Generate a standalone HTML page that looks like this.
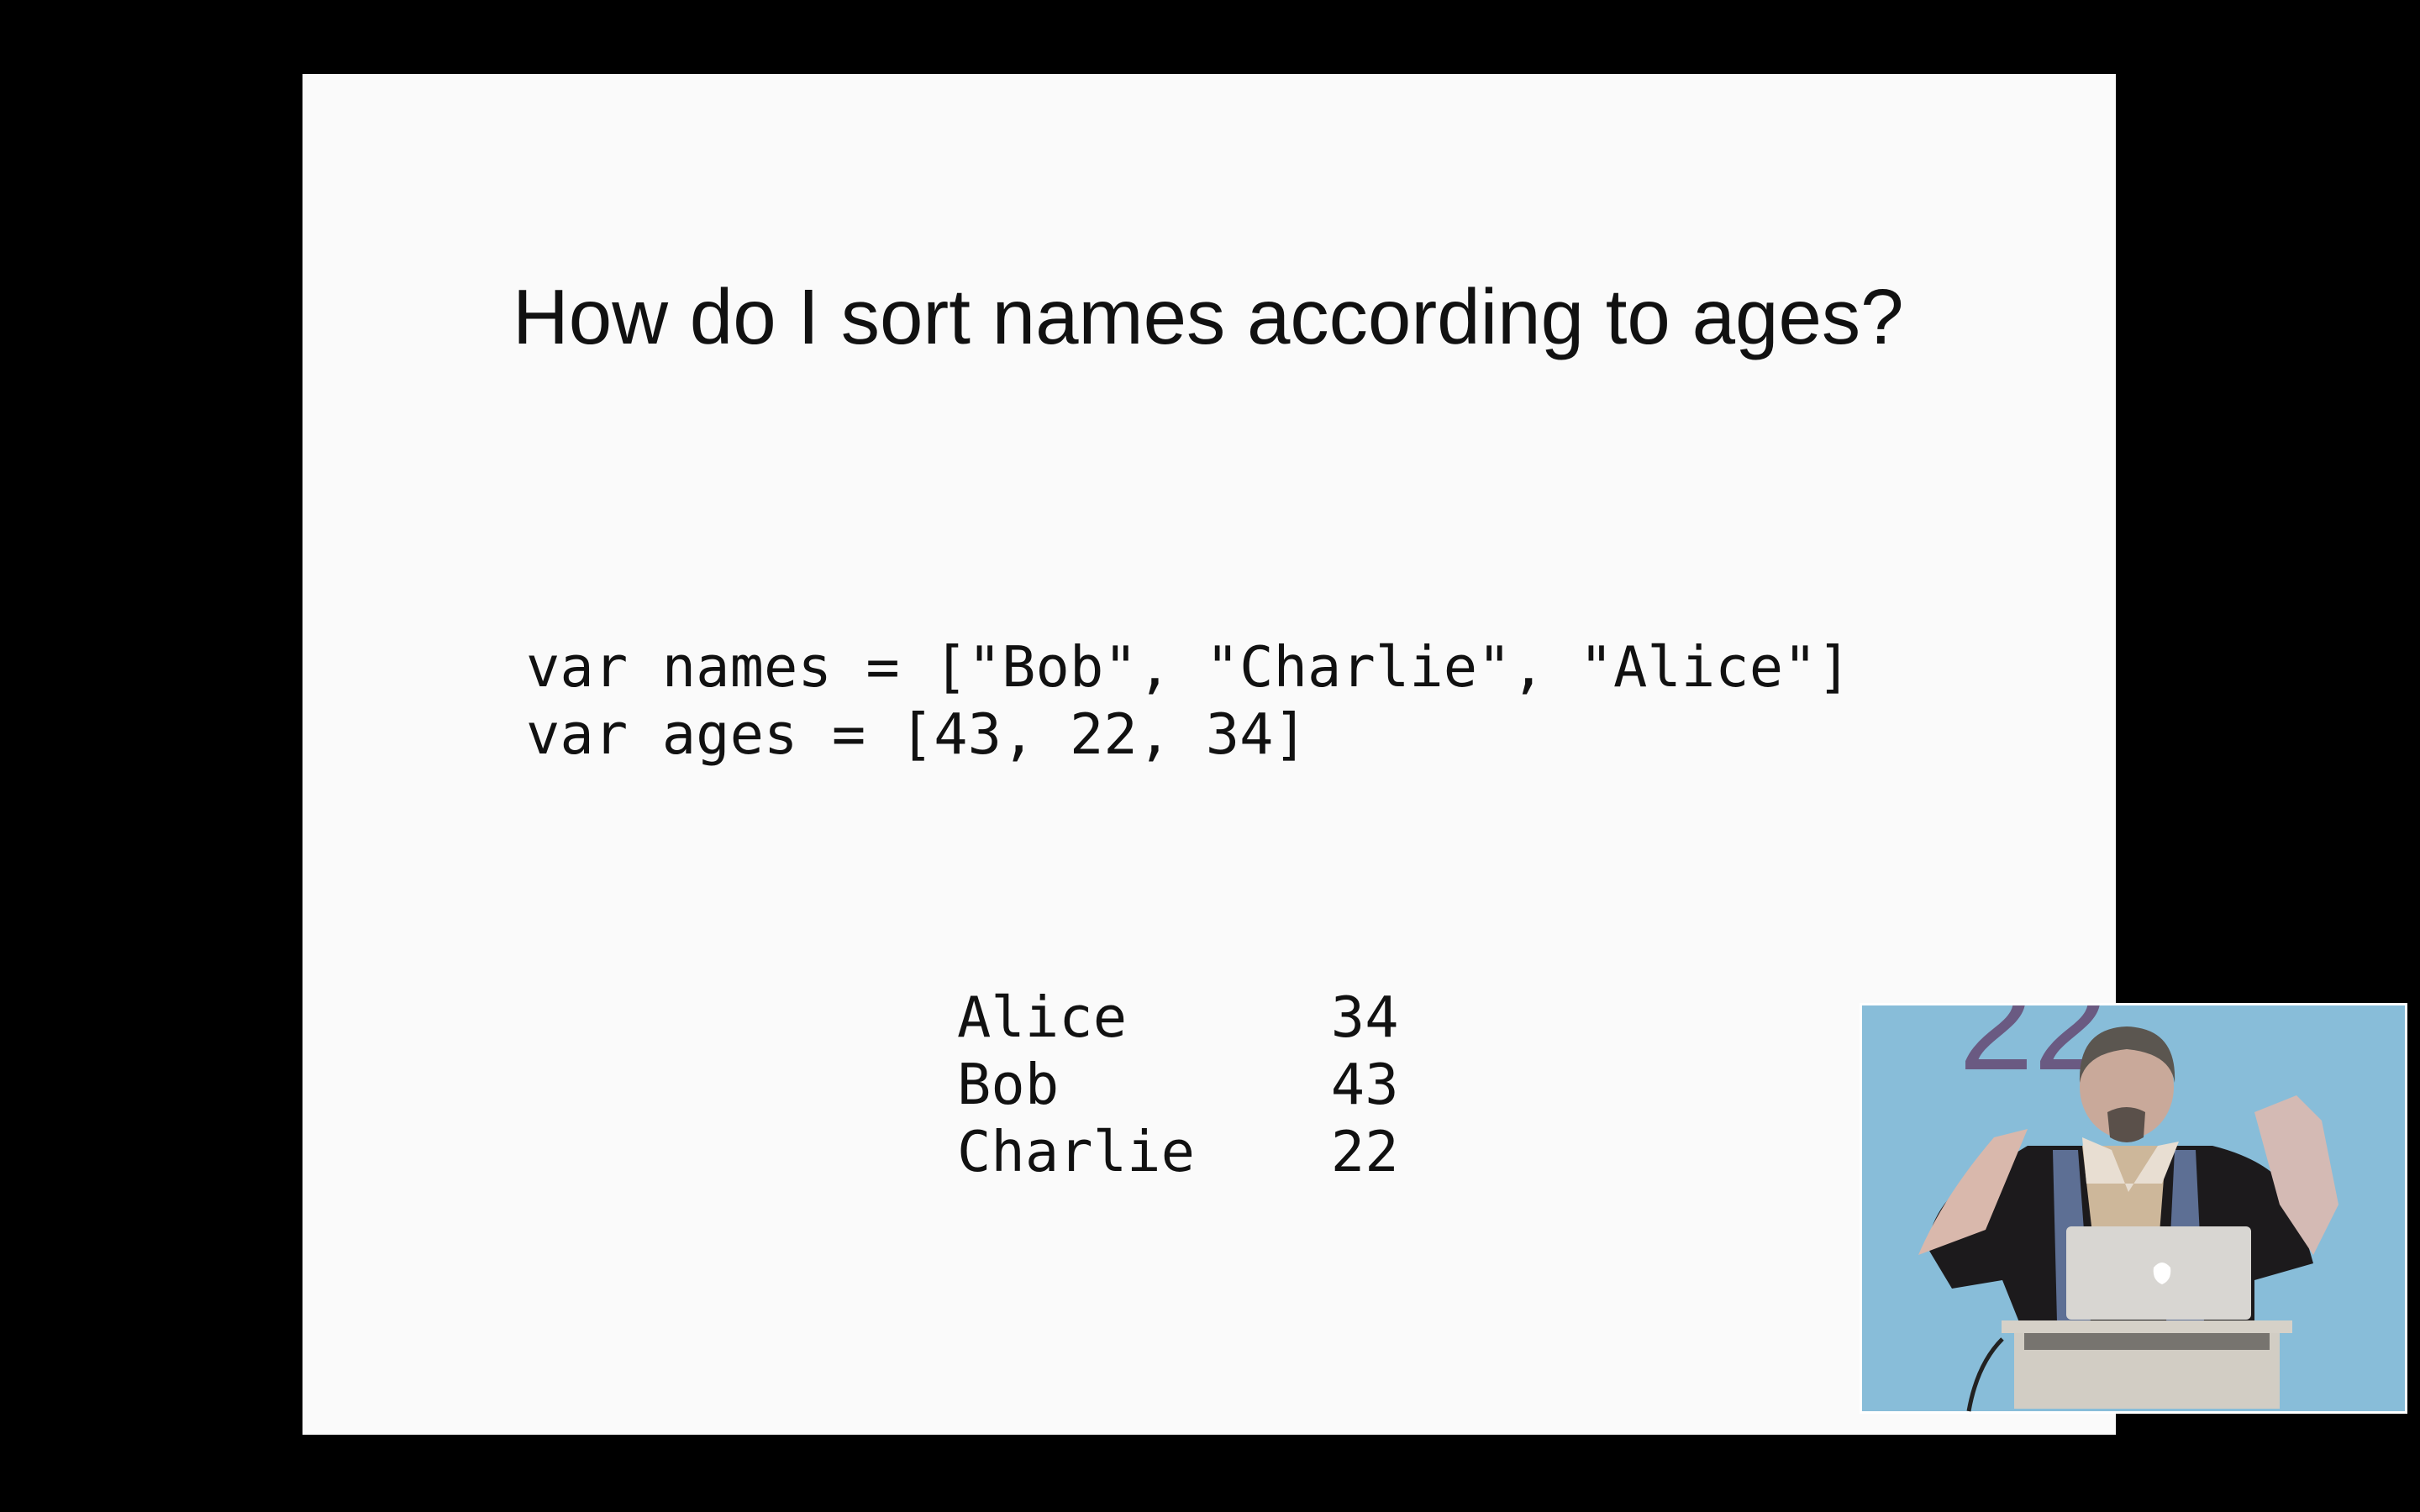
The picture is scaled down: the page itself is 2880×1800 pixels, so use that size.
<!DOCTYPE html>
<html><head><meta charset="utf-8"><style>
html,body{margin:0;padding:0;background:#000;width:2880px;height:1800px;overflow:hidden}
.slide{position:absolute;left:360px;top:88px;width:2158px;height:1620px;background:#fafafa}
.t{position:absolute;left:610px;top:324px;font-family:"Liberation Sans",sans-serif;font-size:92.5px;color:#111;white-space:nowrap}
.code{position:absolute;font-family:"DejaVu Sans Mono","Liberation Mono",monospace;font-size:67px;color:#111;white-space:pre;line-height:80px;letter-spacing:0.1px}
.inset{position:absolute;left:2213px;top:1194px;width:652px;height:489px;background:#fff}
</style></head><body>
<div class="slide"></div>
<div class="t">How do I sort names according to ages?</div>
<div class="code" style="left:626px;top:754px">var names = ["Bob", "Charlie", "Alice"]
var ages = [43, 22, 34]</div>
<div class="code" style="left:1139px;top:1171px">Alice      34
Bob        43
Charlie    22</div>
<div class="inset">
<svg width="652" height="489" viewBox="0 0 652 489">
<rect x="3" y="3" width="646" height="483" fill="#88bdd9"/>
<svg x="3" y="3" width="646" height="483">
<text x="115" y="76" font-family="Liberation Sans,sans-serif" font-size="160" fill="#6a5a82">22</text>
</svg>
<path d="M80 290 Q90 230 150 200 L200 170 L420 170 Q500 190 520 240 L540 310 L470 330 L470 380 L190 380 L170 330 L110 340 Z" fill="#1c1a1c"/>
<path d="M230 175 L260 175 L275 380 L235 380 Z" fill="#5d6f94"/>
<path d="M375 175 L400 175 L410 380 L365 380 Z" fill="#5d6f94"/>
<path d="M265 170 L365 170 L355 300 L280 300 Z" fill="#cdb79a"/>
<path d="M265 160 L300 175 L320 225 L355 170 L380 165 L360 215 L270 215 Z" fill="#e8ded2"/>
<ellipse cx="318" cy="100" rx="56" ry="62" fill="#c9a99a"/>
<path d="M262 95 Q260 30 318 28 Q378 30 375 95 Q370 60 318 55 Q268 60 262 95 Z" fill="#5b5650"/>
<path d="M295 130 Q318 118 340 130 L338 160 Q318 172 298 160 Z" fill="#5a504a"/>
<path d="M70 300 Q100 230 160 160 L200 150 L150 270 Z" fill="#d9b8ac"/>
<path d="M520 110 L550 140 L570 240 L540 300 L500 240 L470 130 Z" fill="#d4bab4"/>
<rect x="246" y="266" width="220" height="111" rx="6" fill="#d8d6d2"/>
<path d="M350 315 q10 -12 20 0 q2 15 -10 20 q-12 -5 -10 -20z" fill="#fff"/>
<rect x="169" y="378" width="346" height="15" fill="#d6d1c8"/>
<rect x="184" y="393" width="316" height="90" fill="#d2cdc4"/>
<rect x="196" y="393" width="292" height="20" fill="#77746f"/>
<path d="M170 400 Q140 430 130 486" stroke="#222" stroke-width="5" fill="none"/>
</svg>
</div>
</body></html>
